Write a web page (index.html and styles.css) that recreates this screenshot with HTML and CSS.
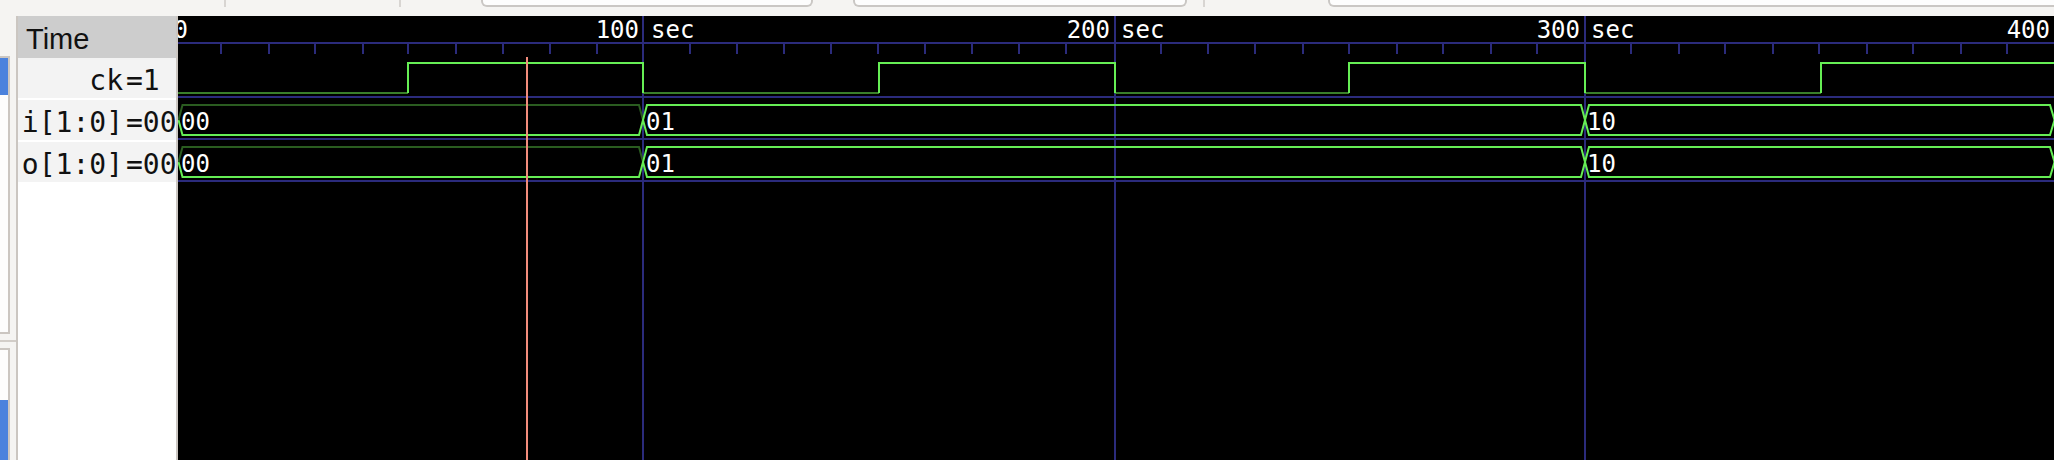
FILE: index.html
```html
<!DOCTYPE html>
<html>
<head>
<meta charset="utf-8">
<title>Waveform viewer</title>
<link rel="stylesheet" href="styles.css">
</head>
<body>
<div class="app">
  <div class="toolbar">
    <span class="sep s1"></span>
    <span class="sep s2"></span>
    <span class="field f1"></span>
    <span class="field f2"></span>
    <span class="sep s3"></span>
    <span class="field f3"></span>
  </div>
  <div class="main">
    <div class="side">
      <div class="pane pane-top"><div class="sel sel-top"></div></div>
      <div class="pane-split"></div>
      <div class="pane pane-bottom"><div class="sel sel-bottom"></div></div>
    </div>
    <div class="signals">
      <div class="sig-header">Time</div>
      <div class="sig-row"><span class="sig-name">ck</span><span class="sig-val">=1</span></div>
      <div class="sig-row"><span class="sig-name">i[1:0]</span><span class="sig-val">=00</span></div>
      <div class="sig-row"><span class="sig-name">o[1:0]</span><span class="sig-val">=00</span></div>
    </div>
    <div class="wave">
      <svg class="wave-svg" width="1876" height="444" viewBox="178 16 1876 444" xmlns="http://www.w3.org/2000/svg">
        <g class="grid" shape-rendering="crispEdges">
          <path d="M178 43H2054 M178 97H2054 M178 139H2054 M178 181H2054"/>
          <path d="M643 16V460 M1115 16V460 M1585 16V460"/>
          <path d="M221 44V54 M269 44V54 M315 44V54 M363 44V54 M408 44V54 M456 44V54 M503 44V54 M550 44V54 M597 44V54
                   M690 44V54 M737 44V54 M784 44V54 M831 44V54 M878 44V54 M925 44V54 M972 44V54 M1019 44V54 M1066 44V54
                   M1161 44V54 M1208 44V54 M1255 44V54 M1303 44V54 M1349 44V54 M1397 44V54 M1443 44V54 M1491 44V54 M1537 44V54
                   M1631 44V54 M1679 44V54 M1725 44V54 M1773 44V54 M1819 44V54 M1867 44V54 M1913 44V54 M1961 44V54 M2007 44V54"/>
        </g>
        <g class="ruler-text">
          <text x="188" y="38" text-anchor="end">0</text>
          <text x="639" y="38" text-anchor="end">100</text>
          <text x="651" y="38">sec</text>
          <text x="1110" y="38" text-anchor="end">200</text>
          <text x="1121" y="38">sec</text>
          <text x="1580" y="38" text-anchor="end">300</text>
          <text x="1591" y="38">sec</text>
          <text x="2050" y="38" text-anchor="end">400</text>
        </g>
        <g class="lo" shape-rendering="crispEdges">
          <path d="M178 93H408 M643 93H879 M1115 93H1349 M1585 93H1821"/>
        </g>
        <g class="hi" shape-rendering="crispEdges">
          <path d="M408 93V63H643V93 M879 93V63H1115V93 M1349 93V63H1585V93 M1821 93V63H2054"/>
        </g>
        <g class="dim">
          <path d="M178.5 120L182.5 105H639L643 120"/>
          <path d="M178.5 162L182.5 147H639L643 162"/>
        </g>
        <g class="hi">
          <path d="M178.5 120L182.5 135H639L647 105H1581L1589 135H2050L2054.5 120"/>
          <path d="M643 120L647 135H1581L1589 105H2050L2054.5 120"/>
          <path d="M178.5 162L182.5 177H639L647 147H1581L1589 177H2050L2054.5 162"/>
          <path d="M643 162L647 177H1581L1589 147H2050L2054.5 162"/>
        </g>
        <g class="val-text">
          <text x="181" y="130">00</text>
          <text x="646" y="130">01</text>
          <text x="1587" y="130">10</text>
          <text x="181" y="172">00</text>
          <text x="646" y="172">01</text>
          <text x="1587" y="172">10</text>
        </g>
        <path class="cursor" d="M527 57V460" shape-rendering="crispEdges"/>
      </svg>
    </div>
  </div>
</div>
</body>
</html>
```

FILE: styles.css
```css
html, body {
  margin: 0;
  padding: 0;
}

body {
  width: 2054px;
  height: 460px;
  overflow: hidden;
  background: #f5f4f2;
}

.app {
  width: 2054px;
  height: 460px;
  display: flex;
  flex-direction: column;
}

/* top strip (bottom edge of the toolbar) */
.toolbar {
  height: 16px;
  flex: 0 0 16px;
  display: flex;
  align-items: flex-start;
  overflow: hidden;
}

.sep {
  flex: 0 0 2px;
  height: 7px;
  background: #d8d5d2;
}

.s1 { margin-left: 224px; }
.s2 { margin-left: 173px; }
.s3 { margin-left: 16px; }

.field {
  flex-shrink: 0;
  box-sizing: border-box;
  height: 7px;
  background: #fdfdfd;
  border: 2px solid #cac7c4;
  border-top: 0;
  border-radius: 0 0 6px 6px;
}

.f1 { margin-left: 80px; width: 332px; }
.f2 { margin-left: 40px; width: 334px; }
.f3 { margin-left: 123px; width: 760px; }

.main {
  flex: 1;
  display: flex;
  min-height: 0;
}

/* narrow left strip with two panes */
.side {
  flex: 0 0 16px;
  display: flex;
  flex-direction: column;
}

.pane {
  box-sizing: border-box;
  width: 10px;
  background: #fdfdfd;
  border-right: 2px solid #cbc6c1;
  border-top: 2px solid #cbc6c1;
}

.pane-top {
  margin-top: 40px;
  height: 306px;
  border-bottom: 2px solid #cbc6c1;
}

.pane-split {
  margin-top: 6px;
  height: 2px;
  width: 16px;
  background: #d2cdc8;
}

.pane-bottom {
  margin-top: 6px;
  flex: 1;
}

.sel {
  background: #4b82dd;
}

.sel-top { height: 37px; }
.sel-bottom { margin-top: 50px; height: 60px; }

/* signal names */
.signals {
  flex: 0 0 162px;
  box-sizing: border-box;
  background: #ffffff;
  border-left: 2px solid #cbc6c1;
  border-right: 2px solid #cbc6c1;
  overflow: hidden;
}

.sig-header {
  box-sizing: border-box;
  height: 42px;
  padding: 4px 0 0 8px;
  line-height: 38px;
  background: #cdcdcd;
  color: #111;
  font-family: "Liberation Sans", Arial, sans-serif;
  font-size: 29px;
}

.sig-row {
  box-sizing: border-box;
  height: 40px;
  margin-bottom: 2px;
  padding-top: 6px;
  line-height: 34px;
  background: #f3f3f3;
  display: grid;
  grid-template-columns: 105px auto;
  column-gap: 3px;
  color: #111;
  font-family: "DejaVu Sans Mono", "Liberation Mono", monospace;
  font-size: 28px;
  white-space: pre;
}

.sig-name { text-align: right; }

/* waveform canvas */
.wave {
  flex: 1;
  background: #000;
  overflow: hidden;
}

.wave-svg {
  display: block;
}

.grid path {
  stroke: #2b2b7c;
  stroke-width: 2;
  fill: none;
}

.lo path {
  stroke: #3a7f2a;
  stroke-width: 2;
  fill: none;
}

.dim path {
  stroke: #2a5c20;
  stroke-width: 2;
  fill: none;
}

.hi path {
  stroke: #66ee55;
  stroke-width: 2;
  fill: none;
}

.ruler-text text,
.val-text text {
  fill: #ffffff;
  font-family: "DejaVu Sans Mono", "Liberation Mono", monospace;
  font-size: 24px;
}

.cursor {
  stroke: #f28c7c;
  stroke-width: 2;
  fill: none;
}
```
